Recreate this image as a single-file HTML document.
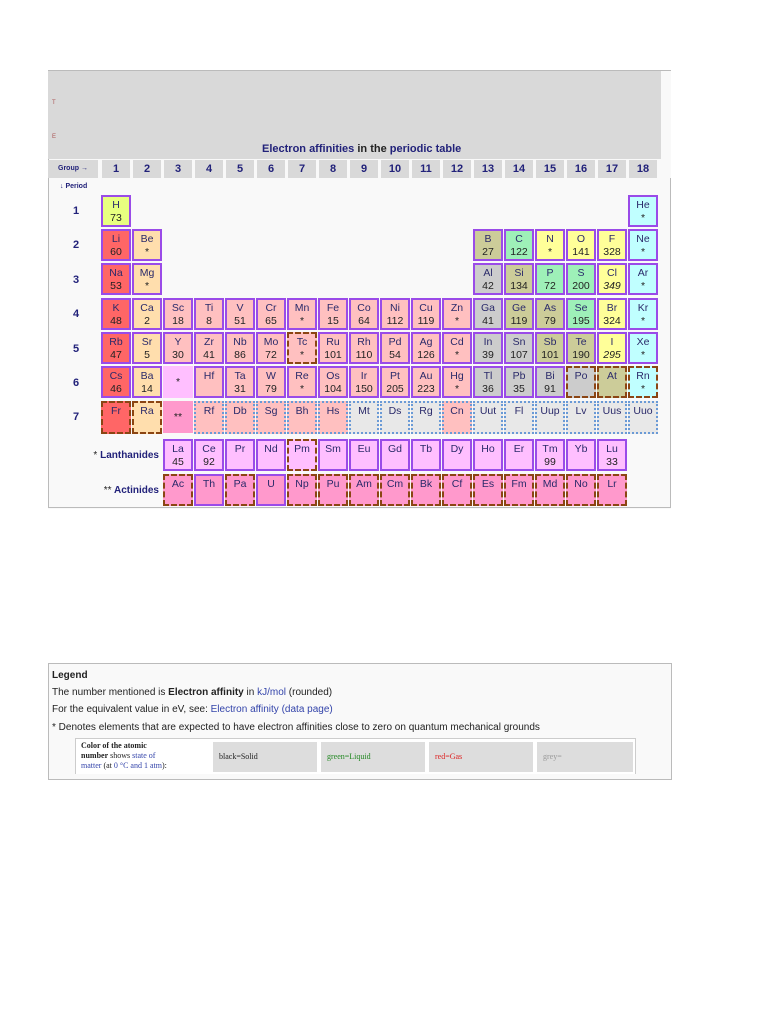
<!DOCTYPE html>
<html><head><meta charset="utf-8">
<style>
body{margin:0;background:#fff;width:768px;height:1024px;position:relative;font-family:"Liberation Sans",sans-serif;overflow:hidden}
.a{position:absolute}
#tbl{left:48px;top:70px;width:623px;height:438px;border-top:1px solid #bbb;background:#f9f9f9}
#hdr{left:48px;top:71px;width:613px;height:88px;background:#d9d9d9}
.grp{top:160px;height:18px;background:#d9d9d9;font-weight:bold;color:#22227a;font-size:11px;text-align:center;line-height:18px}
.c{box-sizing:border-box;width:30px;height:32px;border:2px solid #9a4be8;text-align:center;font-size:10.5px;line-height:13px;padding-top:2px;color:#222}
.c .s{color:#2a2a6a}
.ds{border:2px dashed #8b4513}
.dt{border:2px dotted #6a9ad6}
.pl{left:62px;width:28px;text-align:center;font-weight:bold;color:#22227a;font-size:11px}
</style></head><body>
<div class="a" id="tbl"></div>
<div class="a" style="left:670px;top:178px;width:1px;height:258px;background:#bbb"></div>
<div class="a" style="left:48px;top:70px;width:1px;height:438px;background:#bbb"></div>
<div class="a" style="left:48px;top:507px;width:623px;height:1px;background:#bbb"></div>
<div class="a" style="left:670px;top:436px;width:1px;height:72px;background:#bbb"></div>
<div class="a" id="hdr"></div>
<div class="a" style="left:52px;top:100px;font-size:6px;color:#a55">T</div>
<div class="a" style="left:52px;top:134px;font-size:6px;color:#a55">E</div>
<div class="a" style="left:262px;top:143px;font-size:11px;font-weight:bold;color:#22227a">Electron affinities <span style="color:#222">in the</span> periodic table</div>
<div class="a grp" style="left:48px;width:50px;font-size:7px">Group →</div>
<div class="a" style="left:60px;top:183px;font-size:7px;font-weight:bold;color:#22227a">↓ Period</div>
<div id="g"></div>
<div class="a pl" style="top:205px">1</div>
<div class="a pl" style="top:239px">2</div>
<div class="a pl" style="top:274px">3</div>
<div class="a pl" style="top:308px">4</div>
<div class="a pl" style="top:343px">5</div>
<div class="a pl" style="top:377px">6</div>
<div class="a pl" style="top:411px">7</div>
<div class="a" style="left:60px;width:99px;text-align:right;top:450px;font-size:10px;font-weight:bold;color:#22227a"><span style="color:#222;font-weight:normal">*</span> Lanthanides</div>
<div class="a" style="left:60px;width:99px;text-align:right;top:485px;font-size:10px;font-weight:bold;color:#22227a"><span style="color:#222;font-weight:normal">**</span> Actinides</div>

<div class="a" style="left:48px;top:663px;width:622px;height:115px;border:1px solid #bbb;background:#f9f9f9;font-size:10px;color:#222">
<div class="a" style="left:3px;top:6px;font-weight:bold">Legend</div>
<div class="a" style="left:3px;top:23px">The number mentioned is <b>Electron affinity</b> in <span style="color:#3344aa">kJ/mol</span> (rounded)</div>
<div class="a" style="left:3px;top:40px">For the equivalent value in eV, see: <span style="color:#3344aa">Electron affinity (data page)</span></div>
<div class="a" style="left:3px;top:58px">* Denotes elements that are expected to have electron affinities close to zero on quantum mechanical grounds</div>
<div class="a" style="left:26px;top:74px;width:559px;height:35px;border:1px solid #ccc;border-bottom:none;background:#fff;font-family:'Liberation Serif',serif;font-size:8px">
<div class="a" style="left:5px;top:2px;line-height:10px;width:92px"><b>Color of the atomic number</b> shows <span style="color:#3344aa">state of matter</span> (at <span style="color:#3344aa">0 °C and 1 atm</span>):</div>
<div class="a" style="left:137px;top:3px;width:104px;height:30px;background:#ddd"><span class="a" style="left:6px;top:10px">black=Solid</span></div>
<div class="a" style="left:245px;top:3px;width:104px;height:30px;background:#ddd;color:#228822"><span class="a" style="left:6px;top:10px">green=Liquid</span></div>
<div class="a" style="left:353px;top:3px;width:104px;height:30px;background:#ddd;color:#dd2222"><span class="a" style="left:6px;top:10px">red=Gas</span></div>
<div class="a" style="left:461px;top:3px;width:96px;height:30px;background:#ddd;color:#999"><span class="a" style="left:6px;top:10px">grey=</span></div>
</div>
</div>

<script>
var AK="#ff6666",AE="#ffdead",TR="#ffc0c0",LA="#ffbfff",AC="#ff99cc",PM="#cccccc",MD="#cccc99",HA="#ffff99",NG="#c0ffff",UN="#e8e8e8",H="#e8ff80",NM2="#9ef0b8";
var D=[
[1,1,"H","73",H],[1,18,"He","*",NG],
[2,1,"Li","60",AK],[2,2,"Be","*",AE],[2,13,"B","27",MD],[2,14,"C","122",NM2],[2,15,"N","*",HA],[2,16,"O","141",HA],[2,17,"F","328",HA],[2,18,"Ne","*",NG],
[3,1,"Na","53",AK],[3,2,"Mg","*",AE],[3,13,"Al","42",PM],[3,14,"Si","134",MD],[3,15,"P","72",NM2],[3,16,"S","200",NM2],[3,17,"Cl","<i>349</i>",HA],[3,18,"Ar","*",NG],
[4,1,"K","48",AK],[4,2,"Ca","2",AE],[4,3,"Sc","18",TR],[4,4,"Ti","8",TR],[4,5,"V","51",TR],[4,6,"Cr","65",TR],[4,7,"Mn","*",TR],[4,8,"Fe","15",TR],[4,9,"Co","64",TR],[4,10,"Ni","112",TR],[4,11,"Cu","119",TR],[4,12,"Zn","*",TR],[4,13,"Ga","41",PM],[4,14,"Ge","119",MD],[4,15,"As","79",MD],[4,16,"Se","195",NM2],[4,17,"Br","324",HA],[4,18,"Kr","*",NG],
[5,1,"Rb","47",AK],[5,2,"Sr","5",AE],[5,3,"Y","30",TR],[5,4,"Zr","41",TR],[5,5,"Nb","86",TR],[5,6,"Mo","72",TR],[5,7,"Tc","*",TR,"ds"],[5,8,"Ru","101",TR],[5,9,"Rh","110",TR],[5,10,"Pd","54",TR],[5,11,"Ag","126",TR],[5,12,"Cd","*",TR],[5,13,"In","39",PM],[5,14,"Sn","107",PM],[5,15,"Sb","101",MD],[5,16,"Te","190",MD],[5,17,"I","<i>295</i>",HA],[5,18,"Xe","*",NG],
[6,1,"Cs","46",AK],[6,2,"Ba","14",AE],[6,3,"","*",LA,"nb"],[6,4,"Hf","",TR],[6,5,"Ta","31",TR],[6,6,"W","79",TR],[6,7,"Re","*",TR],[6,8,"Os","104",TR],[6,9,"Ir","150",TR],[6,10,"Pt","205",TR],[6,11,"Au","223",TR],[6,12,"Hg","*",TR],[6,13,"Tl","36",PM],[6,14,"Pb","35",PM],[6,15,"Bi","91",PM],[6,16,"Po","",PM,"ds"],[6,17,"At","",MD,"ds"],[6,18,"Rn","*",NG,"ds"],
[7,1,"Fr","",AK,"ds"],[7,2,"Ra","",AE,"ds"],[7,3,"","**",AC,"nb"],[7,4,"Rf","",TR,"dt"],[7,5,"Db","",TR,"dt"],[7,6,"Sg","",TR,"dt"],[7,7,"Bh","",TR,"dt"],[7,8,"Hs","",TR,"dt"],[7,9,"Mt","",UN,"dt"],[7,10,"Ds","",UN,"dt"],[7,11,"Rg","",UN,"dt"],[7,12,"Cn","",TR,"dt"],[7,13,"Uut","",UN,"dt"],[7,14,"Fl","",UN,"dt"],[7,15,"Uup","",UN,"dt"],[7,16,"Lv","",UN,"dt"],[7,17,"Uus","",UN,"dt"],[7,18,"Uuo","",UN,"dt"]];
var L=["La","Ce","Pr","Nd","Pm","Sm","Eu","Gd","Tb","Dy","Ho","Er","Tm","Yb","Lu"],LV={La:"45",Ce:"92",Tm:"99",Lu:"33"};
var A=["Ac","Th","Pa","U","Np","Pu","Am","Cm","Bk","Cf","Es","Fm","Md","No","Lr"];
L.forEach(function(s,i){D.push([8,3+i,s,LV[s]||"",LA,s=="Pm"?"ds":""]);});
A.forEach(function(s,i){D.push([9,3+i,s,"",AC,(s=="Th"||s=="U")?"":"ds"]);});
var h="",tops=[195,229,263,298,332,366,401,439,474];
for(var g=1;g<=18;g++){h+='<div class="a grp" style="left:'+(102+(g-1)*31)+'px;width:28px">'+g+'</div>';}
D.forEach(function(e){var x=101+(e[1]-1)*31,y=tops[e[0]-1];var cls="a c "+(e[5]||"");var st="left:"+x+"px;top:"+y+"px;background:"+e[4]+";";
if(e[5]=="nb"){st+="border:none;padding-top:10px;";}
if(e[0]==7&&e[5]!="nb")st+="height:33px;";
h+='<div class="'+cls+'" style="'+st+'"><div class="s">'+e[2]+'</div><div>'+e[3]+'</div></div>';});
document.getElementById("g").innerHTML=h;
</script>
</body></html>
